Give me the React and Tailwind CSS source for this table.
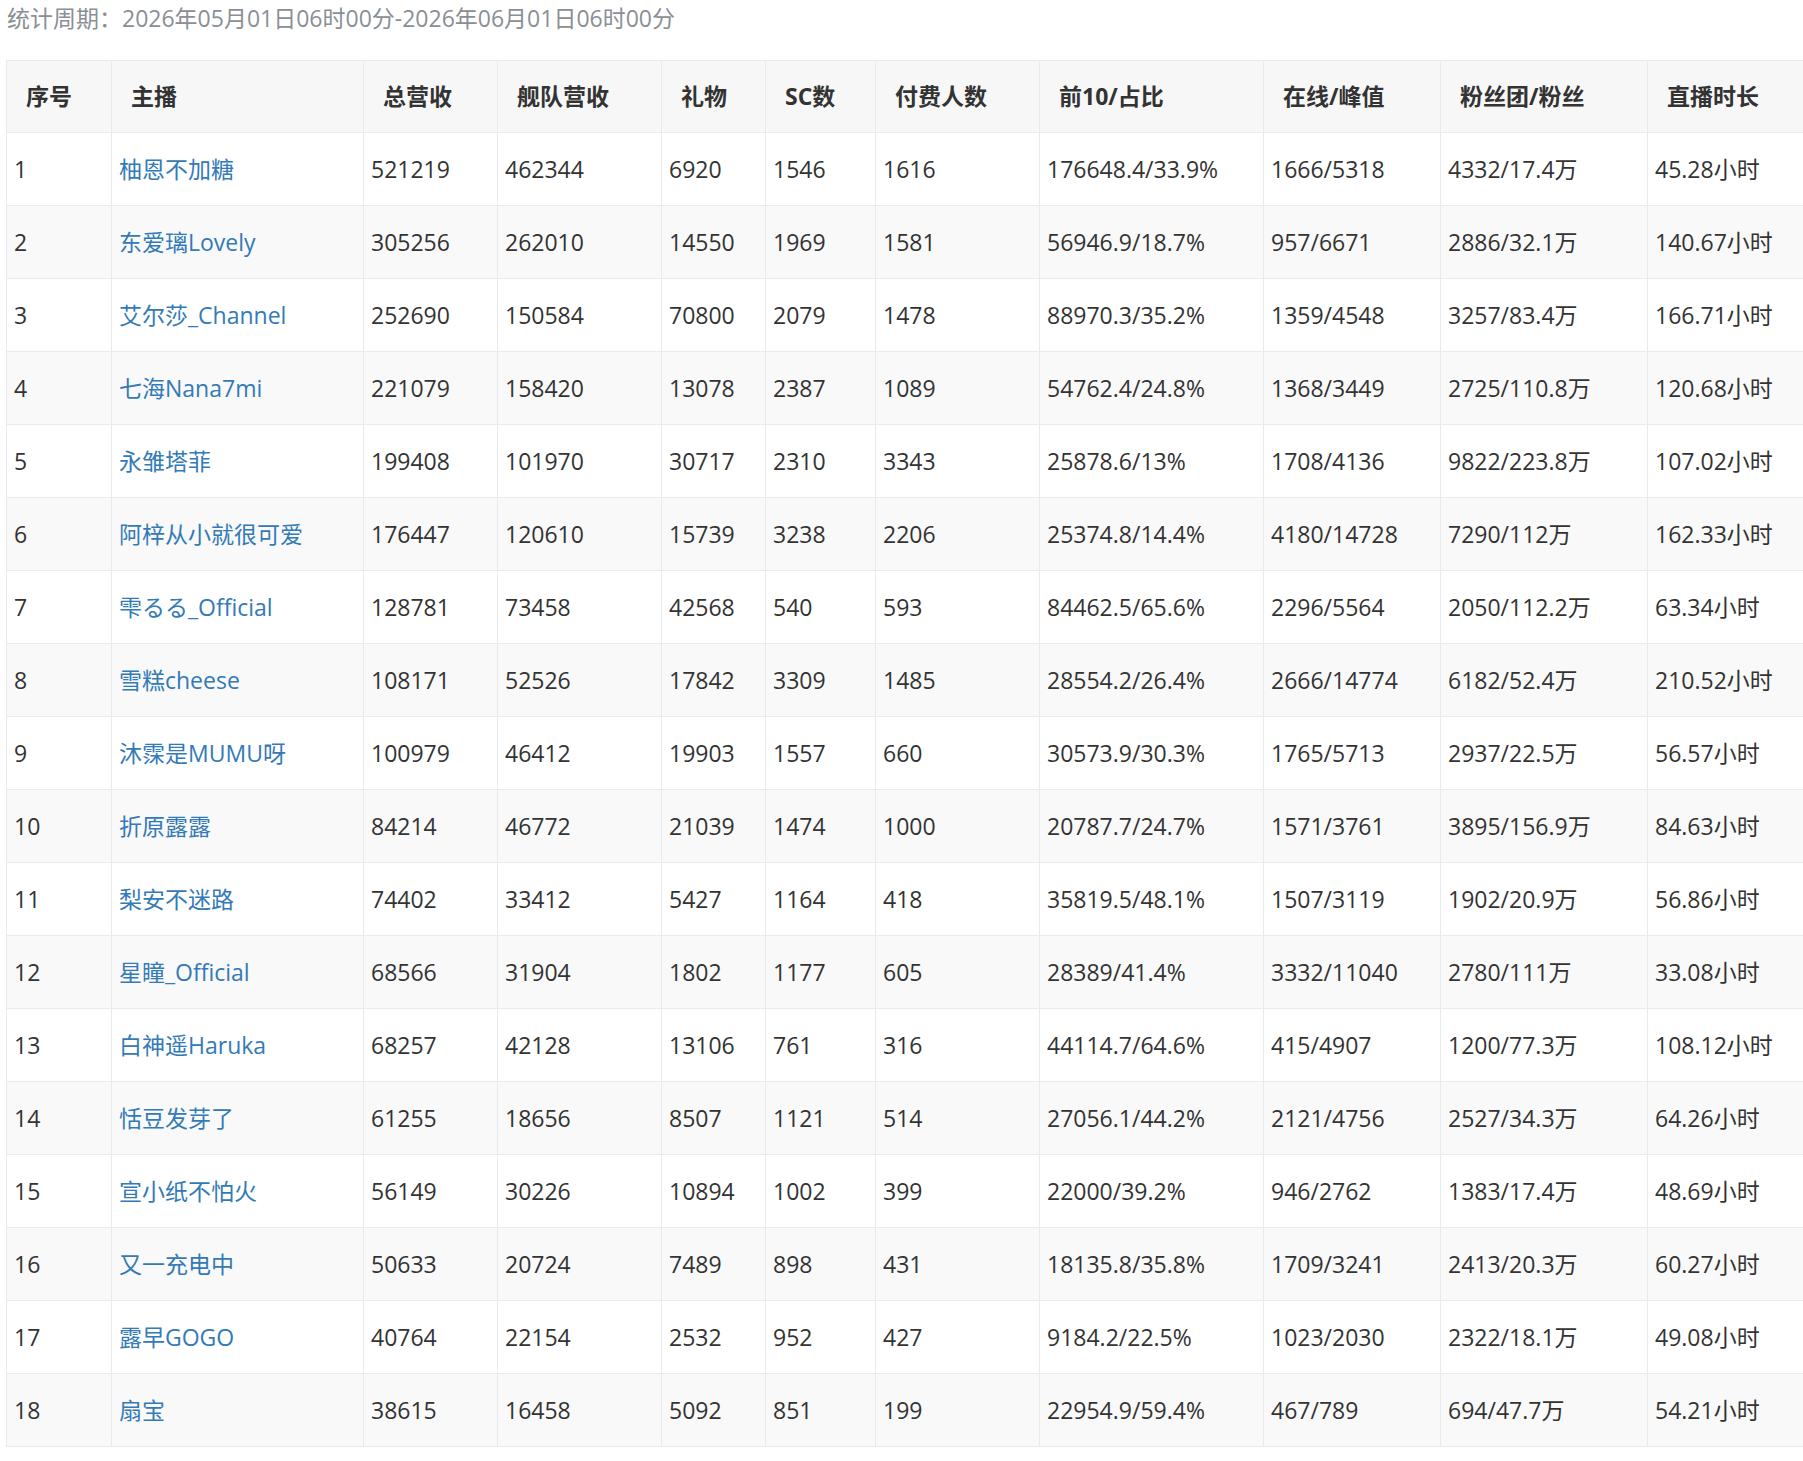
import React from "react";

const rows = [
  ["1", "柚恩不加糖", "521219", "462344", "6920", "1546", "1616", "176648.4/33.9%", "1666/5318", "4332/17.4万", "45.28小时"],
  ["2", "东爱璃Lovely", "305256", "262010", "14550", "1969", "1581", "56946.9/18.7%", "957/6671", "2886/32.1万", "140.67小时"],
  ["3", "艾尔莎_Channel", "252690", "150584", "70800", "2079", "1478", "88970.3/35.2%", "1359/4548", "3257/83.4万", "166.71小时"],
  ["4", "七海Nana7mi", "221079", "158420", "13078", "2387", "1089", "54762.4/24.8%", "1368/3449", "2725/110.8万", "120.68小时"],
  ["5", "永雏塔菲", "199408", "101970", "30717", "2310", "3343", "25878.6/13%", "1708/4136", "9822/223.8万", "107.02小时"],
  ["6", "阿梓从小就很可爱", "176447", "120610", "15739", "3238", "2206", "25374.8/14.4%", "4180/14728", "7290/112万", "162.33小时"],
  ["7", "雫るる_Official", "128781", "73458", "42568", "540", "593", "84462.5/65.6%", "2296/5564", "2050/112.2万", "63.34小时"],
  ["8", "雪糕cheese", "108171", "52526", "17842", "3309", "1485", "28554.2/26.4%", "2666/14774", "6182/52.4万", "210.52小时"],
  ["9", "沐霂是MUMU呀", "100979", "46412", "19903", "1557", "660", "30573.9/30.3%", "1765/5713", "2937/22.5万", "56.57小时"],
  ["10", "折原露露", "84214", "46772", "21039", "1474", "1000", "20787.7/24.7%", "1571/3761", "3895/156.9万", "84.63小时"],
  ["11", "梨安不迷路", "74402", "33412", "5427", "1164", "418", "35819.5/48.1%", "1507/3119", "1902/20.9万", "56.86小时"],
  ["12", "星瞳_Official", "68566", "31904", "1802", "1177", "605", "28389/41.4%", "3332/11040", "2780/111万", "33.08小时"],
  ["13", "白神遥Haruka", "68257", "42128", "13106", "761", "316", "44114.7/64.6%", "415/4907", "1200/77.3万", "108.12小时"],
  ["14", "恬豆发芽了", "61255", "18656", "8507", "1121", "514", "27056.1/44.2%", "2121/4756", "2527/34.3万", "64.26小时"],
  ["15", "宣小纸不怕火", "56149", "30226", "10894", "1002", "399", "22000/39.2%", "946/2762", "1383/17.4万", "48.69小时"],
  ["16", "又一充电中", "50633", "20724", "7489", "898", "431", "18135.8/35.8%", "1709/3241", "2413/20.3万", "60.27小时"],
  ["17", "露早GOGO", "40764", "22154", "2532", "952", "427", "9184.2/22.5%", "1023/2030", "2322/18.1万", "49.08小时"],
  ["18", "扇宝", "38615", "16458", "5092", "851", "199", "22954.9/59.4%", "467/789", "694/47.7万", "54.21小时"],
];

const headers = ["序号", "主播", "总营收", "舰队营收", "礼物", "SC数", "付费人数", "前10/占比", "在线/峰值", "粉丝团/粉丝", "直播时长"];

export default function App() {
  return (
    <div
      className="w-full overflow-hidden bg-white text-[#333333]"
      style={{ fontFamily: '"Open Sans", "Noto Sans CJK SC", sans-serif' }}
    >
      <div className="h-[36px] pl-[7px] text-[23px] leading-[36px] text-[#8a8f95] whitespace-nowrap">
        统计周期：2026年05月01日06时00分-2026年06月01日06时00分
      </div>
      <div className="mt-[24px] pl-[6px] pb-[13px]">
        <table className="w-[1841px] table-fixed border-collapse text-[23px]">
          <colgroup>
            <col className="w-[105px]" />
            <col className="w-[252px]" />
            <col className="w-[134px]" />
            <col className="w-[164px]" />
            <col className="w-[104px]" />
            <col className="w-[110px]" />
            <col className="w-[164px]" />
            <col className="w-[224px]" />
            <col className="w-[177px]" />
            <col className="w-[207px]" />
            <col className="w-[200px]" />
          </colgroup>
          <thead>
            <tr className="bg-[#f7f7f7]">
              {headers.map((h) => (
                <th
                  key={h}
                  className="h-[72px] border border-[#e8eaed] pl-[19px] pr-2 text-left align-middle font-bold whitespace-nowrap"
                >
                  {h}
                </th>
              ))}
            </tr>
          </thead>
          <tbody>
            {rows.map((r, i) => (
              <tr key={r[0]} className={i % 2 === 1 ? "bg-[#f9f9f9]" : "bg-white"}>
                {r.map((c, j) => (
                  <td
                    key={j}
                    className={
                      "h-[73px] border border-[#e8eaed] pl-[7px] pr-2 align-middle whitespace-nowrap " +
                      (j === 1 ? "text-[#337ab7]" : "")
                    }
                  >
                    {c}
                  </td>
                ))}
              </tr>
            ))}
          </tbody>
        </table>
      </div>
    </div>
  );
}
